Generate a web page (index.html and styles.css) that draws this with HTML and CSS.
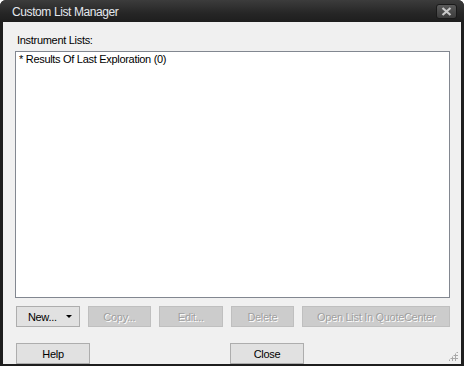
FILE: index.html
```html
<!DOCTYPE html>
<html lang="en">
<head>
    <meta charset="UTF-8">
    <title>Custom List Manager</title>
    <link rel="stylesheet" href="styles.css">
</head>
<body>

<div class="window">
    <!-- Title Bar -->
    <div class="titlebar">
        <span class="title">Custom List Manager</span>
        <button type="button" class="close-x" aria-label="Close">
            <svg width="11" height="9" viewBox="0 0 11 9">
                <path d="M1.5 1 L9.5 8 M9.5 1 L1.5 8" stroke="#c8c8c8" stroke-width="2.2" fill="none"/>
            </svg>
        </button>
    </div>

    <!-- Client Area -->
    <div class="client">
        <div class="field-label">Instrument Lists:</div>
        <div class="listbox">
            <div class="list-item">* Results Of Last Exploration (0)</div>
        </div>

        <div class="button-row">
            <button type="button" class="btn btn-new">New... <span class="arrow"></span></button>
            <button type="button" class="btn btn-small" disabled>Copy...</button>
            <button type="button" class="btn btn-small" disabled>Edit...</button>
            <button type="button" class="btn btn-small" disabled>Delete</button>
            <button type="button" class="btn btn-wide" disabled>Open List In QuoteCenter</button>
        </div>

        <div class="button-row bottom-row">
            <button type="button" class="btn btn-help">Help</button>
            <button type="button" class="btn btn-help btn-close">Close</button>
        </div>

        <div class="grip"></div>
    </div>
</div>

</body>
</html>
```

FILE: styles.css
```css
body {
    margin: 0;
    font-family: 'Liberation Sans', Arial, sans-serif;
    font-size: 11px;
    letter-spacing: -0.3px;
    color: #000;
    background: #ffffff;
}

.window {
    width: 464px;
    height: 366px;
    background: #1e1e1e;
    border-radius: 6px 6px 0 0;
    display: flex;
    flex-direction: column;
    overflow: hidden;
}

.titlebar {
    height: 22px;
    display: flex;
    align-items: center;
    justify-content: space-between;
    padding: 0 7px 0 12px;
    background: linear-gradient(#3c3c3c, #262626 60%, #1e1e1e);
    flex-shrink: 0;
}

.title {
    color: #e4e8ee;
    font-size: 12px;
    letter-spacing: -0.4px;
    padding-top: 1px;
}

.close-x {
    width: 21px;
    height: 15px;
    margin-top: 1px;
    padding: 0;
    border: 1px solid #1a1a1a;
    border-radius: 3px;
    background: linear-gradient(#5a5a5a, #3c3c3c);
    display: flex;
    align-items: center;
    justify-content: center;
}

.client {
    position: relative;
    flex: 1;
    margin: 0 3px 4px 3px;
    background: #f0f0f0;
    padding: 12px 11px 0 12px;
}

.field-label {
    margin-left: 2px;
    height: 17px;
}

.listbox {
    height: 243px;
    background: #fff;
    border: 1px solid #828790;
    padding: 1px 3px;
}

.list-item {
    line-height: 13px;
}

.button-row {
    display: flex;
    margin-top: 8px;
    margin-left: 1px;
}

.bottom-row {
    margin-top: 16px;
}

.btn {
    height: 21px;
    padding: 0;
    font-family: inherit;
    font-size: 11px;
    letter-spacing: inherit;
    color: #000;
    background: #e1e1e1;
    border: 1px solid #adadad;
    margin-right: 8px;
}

.btn:disabled {
    background: #cccccc;
    border-color: #bfbfbf;
    color: #a0a0a0;
    text-shadow: 1px 1px 0 #fff;
}

.btn-new {
    width: 64px;
    display: flex;
    align-items: center;
    justify-content: center;
    padding-left: 4px;
}

.arrow {
    width: 0;
    height: 0;
    margin-left: 9px;
    border-left: 3px solid transparent;
    border-right: 3px solid transparent;
    border-top: 3px solid #000;
}

.btn-small {
    width: 64px;
}

.btn-wide {
    width: 149px;
    margin-right: 0;
}

.btn-help {
    width: 74px;
    margin-right: 140px;
}

.btn-close {
    margin-right: 0;
}

.grip {
    position: absolute;
    right: 3px;
    bottom: 3px;
    width: 10px;
    height: 10px;
    background:
        radial-gradient(circle, #a8a8a8 0 1px, transparent 1.2px) 0 0 / 3px 3px;
    clip-path: polygon(100% 0, 100% 100%, 0 100%);
}
```
